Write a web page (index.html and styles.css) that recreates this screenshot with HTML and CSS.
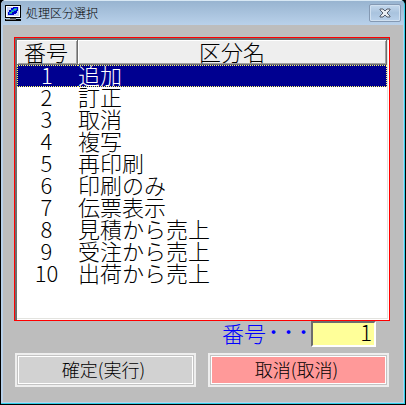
FILE: index.html
```html
<!DOCTYPE html>
<html lang="ja">
<head>
    <meta charset="UTF-8">
    <meta name="viewport" content="width=device-width, initial-scale=1.0">
    <title>処理区分選択</title>
    <link rel="stylesheet" href="styles.css">
</head>
<body>
    <div class="window">
        <!-- Title bar -->
        <header class="titlebar">
            <svg class="app-icon" width="16" height="16" viewBox="0 0 16 16" shape-rendering="crispEdges">
                <rect x="0" y="0" width="16" height="13" fill="#000"/>
                <rect x="1" y="1" width="14" height="11" fill="#fff"/>
                <rect x="2" y="2" width="12" height="9" fill="#c8d4f8"/>
                <path d="M8 2h5v4h-1v2h-1v1H9v1H3V7h1V5h2V3h2z" fill="#0000c8"/>
                <path d="M9 3h3v2h-1v1H9v1H7v2H4V7h2V5h2V4h1z" fill="#1080e0"/>
                <path d="M9 4h2v1H9zM5 7h2v1H5zM7 6h1v1H7z" fill="#40d060"/>
                <rect x="5" y="13" width="6" height="1" fill="#555"/>
                <rect x="0" y="14" width="16" height="2" fill="#000"/>
                <rect x="1" y="14" width="10" height="1" fill="#777"/>
            </svg>
            <h1>処理区分選択</h1>
            <button type="button" class="close" aria-label="閉じる">
                <svg width="12" height="10" viewBox="0 0 12 10">
                    <path d="M1 1h3l2 2 2-2h3v1L8 5l3 3v1H8L6 7 4 9H1V8l3-3-3-3z" fill="#e8edf2" stroke="#555d6b"/>
                </svg>
            </button>
        </header>

        <form class="content">
            <!-- List -->
            <div class="list">
                <table>
                    <thead>
                        <tr><th class="no">番号</th><th>区分名</th></tr>
                    </thead>
                    <tbody>
                        <tr class="selected"><td class="no">1</td><td>追加</td></tr>
                        <tr><td class="no">2</td><td>訂正</td></tr>
                        <tr><td class="no">3</td><td>取消</td></tr>
                        <tr><td class="no">4</td><td>複写</td></tr>
                        <tr><td class="no">5</td><td>再印刷</td></tr>
                        <tr><td class="no">6</td><td>印刷のみ</td></tr>
                        <tr><td class="no">7</td><td>伝票表示</td></tr>
                        <tr><td class="no">8</td><td>見積から売上</td></tr>
                        <tr><td class="no">9</td><td>受注から売上</td></tr>
                        <tr><td class="no">10</td><td>出荷から売上</td></tr>
                    </tbody>
                </table>
            </div>

            <!-- Number entry -->
            <div class="entry">
                <label for="number">番号<span class="dots">・・・</span></label>
                <input type="text" id="number" value="1">
            </div>

            <!-- Buttons -->
            <div class="actions">
                <button type="button" class="action">確定(実行)</button>
                <button type="button" class="action cancel">取消(取消)</button>
            </div>
        </form>
    </div>
</body>
</html>
```

FILE: styles.css
```css
* {
    margin: 0;
    padding: 0;
    box-sizing: border-box;
}
body {
    font-family: "Noto Sans CJK JP", sans-serif;
    font-weight: 300;
    background: #000;
    color: #000;
}

/* Window */
.window {
    display: flex;
    flex-direction: column;
    min-height: calc(100vh - 1px);
    margin: 0 1px 1px;
    background: #bdbdbd;
    border: solid #30d0e8;
    border-width: 0 1px 1px 0;
    border-radius: 5px 5px 0 0;
    box-shadow: inset 2px 0 #b9d1ea, inset -1px -1px #b9d1ea;
    overflow: hidden;
}

/* Title bar */
.titlebar {
    display: flex;
    align-items: center;
    height: 25px;
    padding: 0 3px 0 4px;
    background: linear-gradient(#98b4d0, #b9d1ea);
    border-top: 1px solid #d8e8f4;
}
.titlebar h1 {
    flex: 1;
    margin-left: 5px;
    font-size: 12px;
    font-weight: 300;
    line-height: 24px;
}
.close {
    display: flex;
    align-items: center;
    justify-content: center;
    width: 32px;
    height: 18px;
    background: linear-gradient(#c4d8ec, #a9c3de 50%, #b9d1ea);
    border: 1px solid #8499b3;
    border-radius: 2px;
    box-shadow: inset 0 0 0 1px #d0e0f0;
}

/* Content */
.content {
    flex: 1;
    display: flex;
    flex-direction: column;
    padding: 12px 14px 16px 13px;
}
.list {
    flex: 1;
    background: #fff;
    border: 1px solid #f00;
    box-shadow: inset 2px 2px #6d6d6d, inset -1px -1px #fff, inset -2px -2px #e3e3df;
    padding: 2px;
}
table {
    width: 100%;
    border-collapse: separate;
    border-spacing: 0;
    font-size: 22px;
    line-height: 18px;
}
th {
    height: 25px;
    padding-bottom: 2px;
    font-weight: 300;
    background: #eee;
    border: solid #6d6d6d;
    border-width: 0 1px 1px 0;
    box-shadow: inset 1px 1px #fff, inset -1px -1px #a0a0a0;
}
td {
    height: 22px;
    padding-bottom: 4px;
}
.no {
    width: 61px;
    padding-right: 2px;
    text-align: center;
}
.selected td {
    padding-bottom: 3px;
    background: #000090;
    color: #fff;
    border: dotted #ff6;
    border-width: 1px 0;
    line-height: 17px;
}
.selected td:first-child {
    border-left-width: 1px;
}
.selected td:last-child {
    border-right-width: 1px;
}

/* Number entry */
.entry {
    display: flex;
    align-items: center;
    justify-content: flex-end;
    height: 26px;
    padding-right: 14px;
}
.entry label {
    display: flex;
    padding-bottom: 4px;
    font-size: 22px;
    line-height: 22px;
    color: #00f;
}
.dots {
    font-size: 15px;
    font-weight: 700;
}
.entry input {
    width: 65px;
    height: 26px;
    padding: 0 2px 6px 0;
    background: #ff9;
    border: 2px solid;
    border-color: #6d6d6d #fff #fff #6d6d6d;
    border-radius: 0;
    font: inherit;
    font-size: 22px;
    line-height: 16px;
    text-align: right;
}

/* Buttons */
.actions {
    display: flex;
    gap: 12px;
    margin-top: 6px;
    padding: 0 1px;
}
.action {
    flex: 1;
    height: 34px;
    padding: 0 4px 2px 0;
    background: #d2d2d2;
    border: 1px solid #eee;
    box-shadow: inset 0 0 0 1px #eee, inset 0 0 0 2px #c3c3c3, inset 0 0 0 3px #fff;
    font: inherit;
    font-size: 18px;
    line-height: 24px;
}
.cancel {
    background: #f99;
}
```
